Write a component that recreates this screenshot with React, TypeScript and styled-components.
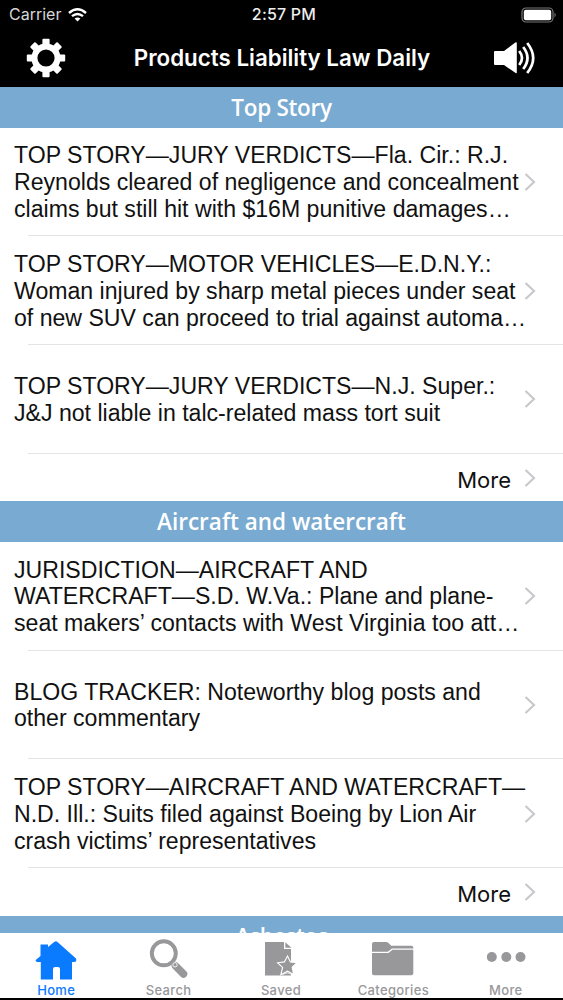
import React from 'react';
import styled, { createGlobalStyle } from 'styled-components';

const GlobalStyle = createGlobalStyle`
  * { box-sizing: border-box; }
  html, body { margin: 0; padding: 0; background: #000; }
`;

const Screen = styled.div`
  width: 563px;
  height: 1000px;
  display: flex;
  flex-direction: column;
  overflow: hidden;
  background: #fff;
  border-bottom: 2px solid #000;
  font-family: 'Liberation Sans', sans-serif;
`;

const StatusBar = styled.div`
  height: 29px;
  flex: none;
  display: grid;
  grid-template-columns: 1fr auto 1fr;
  align-items: center;
  padding: 0 6px 0 9px;
  background: #000;
  color: #fff;
  font: 400 16px/29px Inter, sans-serif;
`;

const Carrier = styled.div`
  display: flex;
  align-items: center;
  gap: 7px;
  color: #d6d6d6;
`;

const Clock = styled.div`
  padding-left: 2px;
  font-weight: 500;
  letter-spacing: 0.2px;
  color: #eee;
`;

const Battery = styled.svg`
  justify-self: end;
`;

const NavBar = styled.header`
  height: 58px;
  flex: none;
  display: flex;
  align-items: center;
  justify-content: space-between;
  padding: 0 27px 0 26px;
  background: #000;
`;

const Title = styled.h1`
  margin: 0 0 0 5px;
  color: #fff;
  font: 600 22.35px/30px Inter, sans-serif;
  white-space: nowrap;
`;

const Feed = styled.main`
  flex: 1;
  min-height: 0;
  overflow: hidden;
`;

const SectionTitle = styled.h2<{ $tracking?: number }>`
  margin: 0;
  height: 40.5px;
  background: #79aad1;
  color: #fff;
  text-align: center;
  font: 600 22.5px/41px 'Open Sans', sans-serif;
  letter-spacing: ${(p) => p.$tracking ?? 0}px;
`;

const Row = styled.article`
  height: 108.75px;
  display: flex;
  align-items: center;
  justify-content: space-between;
  padding: 1px 27px 0 14px;
  background: linear-gradient(#e4e4e6, #e4e4e6) 28px 100% / 100% 1px no-repeat;
`;

const Headline = styled.div`
  color: #111;
  font-size: 23.1px;
  line-height: 26.75px;
`;

const Line = styled.div`
  white-space: nowrap;
`;

const StoryArrow = styled.div`
  display: flex;
  flex: none;
  margin: -1px 0 0 -20px;
`;

const MoreRow = styled.div`
  height: 47.5px;
  display: flex;
  align-items: center;
  justify-content: flex-end;
  gap: 13px;
  padding-right: 27px;
  color: #111;
  font: 400 22px/30px Inter, sans-serif;
`;

const MoreLabel = styled.span`
  padding-top: 5px;
`;

const TabBar = styled.nav`
  height: 65px;
  flex: none;
  display: grid;
  grid-template-columns: repeat(5, 1fr);
  padding-right: 1px;
  background: #fff;
`;

const Tab = styled.div<{ $active?: boolean }>`
  display: flex;
  flex-direction: column;
  align-items: center;
  padding-top: 5px;
  color: ${(p) => (p.$active ? '#0a7aff' : '#98989b')};
  font: 500 13px/16px Inter, sans-serif;
  letter-spacing: 0.35px;

  svg { display: block; }
`;

const Chevron = () => (
  <svg width="12" height="20" viewBox="0 0 12 20" fill="none" stroke="#c9c9cd" strokeWidth="2.2">
    <path d="M1.5 2 L10 10 L1.5 18" />
  </svg>
);

const Wifi = () => (
  <svg width="19" height="14" viewBox="0 0 19 14" fill="none" stroke="#fff" strokeWidth="2.4">
    <path d="M1 5 Q9.5 -2.3 18 5" />
    <path d="M4 8.2 Q9.5 3.6 15 8.2" />
    <path d="M6.6 10.6 Q9.5 8.2 12.4 10.6 L9.5 13.6Z" fill="#fff" stroke="none" />
  </svg>
);

const Gear = () => (
  <svg width="40" height="40" viewBox="-20 -20 40 40">
    <circle r="11.6" fill="none" stroke="#fff" strokeWidth="6" />
    {[0, 45, 90, 135, 180, 225, 270, 315].map((a) => (
      <path key={a} d="M-3.6 -12 V-18.2 Q-3.6 -19.2 -2.6 -19.2 H2.6 Q3.6 -19.2 3.6 -18.2 V-12Z" fill="#fff" transform={`rotate(${a})`} />
    ))}
  </svg>
);

const Speaker = () => (
  <svg width="43" height="34" viewBox="0 0 43 34" fill="none" stroke="#fff" strokeWidth="2.7">
    <path d="M2 10 H11 L22.3 1.5 Q23.8 .6 23.8 2 V31.5 Q23.8 33 22.3 31.8 L11 24 H2 Q1 24 1 23 V11 Q1 10 2 10Z" fill="#fff" stroke="none" />
    <path d="M26.2 10 Q31.8 17 26.2 24" />
    <path d="M30.2 6 Q38.8 17 30.2 28" />
    <path d="M34.2 2 Q46.2 17 34.2 32" />
  </svg>
);

const HomeIcon = () => (
  <svg width="42" height="44" viewBox="0 0 42 44" fill="currentColor">
    <path d="M5.5 18 V6.5 H13 V9 L19.5 3.7 Q21 2.6 22.5 3.9 L41 20.5 Q42 23.8 39.5 24 H37 V41.5 H25 V31 Q25 29 23 29 H20 Q18 29 18 31 V41.5 H5.8 V24 H2 Q-.2 23 1 21.8Z" />
  </svg>
);

const SearchIcon = () => (
  <svg width="42" height="44" viewBox="0 0 42 44" fill="none" stroke="currentColor">
    <circle cx="15.8" cy="15.3" r="12" strokeWidth="3.9" />
    <path d="M27.5 27.8 L35.5 36" strokeWidth="7.6" strokeLinecap="round" />
    <circle cx="27" cy="26.8" r="2.2" stroke="#fff" strokeWidth=".9" />
  </svg>
);

const SavedIcon = () => (
  <svg width="42" height="44" viewBox="0 0 42 44" fill="currentColor">
    <path d="M5 4 H24 V11 H31 V37.5 H5Z" />
    <path d="M25.3 4.2 L31.5 9.8 H25.3Z" />
    <path d="M27.5 18 L30.4 23.9 L37 24.6 L32.2 29.2 L33.6 36.4 L27.5 33.2 L20.8 36.8 L22.6 29.4 L17.6 24.8 L24.4 23.9Z" stroke="#fff" strokeWidth="1.1" />
    <path d="M22.5 36.8 Q27.5 33 32 36.8" fill="none" stroke="#fff" strokeWidth=".8" />
  </svg>
);

const FolderIcon = () => (
  <svg width="42" height="44" viewBox="0 0 42 44" fill="currentColor">
    <path d="M0 13.8 V6 Q0 4 2 4 H14.5 Q16 4 17 5.5 L19.2 7.8 H39.5 Q41.3 7.8 41.3 9.5 V10.5 H20 L15.8 13.8Z" />
    <path d="M0 15 H16.5 L20.5 11.7 H41.3 V35.2 Q41.3 37.3 39.3 37.3 H2 Q0 37.3 0 35.2Z" />
  </svg>
);

const DotsIcon = () => (
  <svg width="42" height="44" viewBox="0 0 42 44" fill="currentColor">
    <circle cx="6.8" cy="19" r="5" />
    <circle cx="21.3" cy="19" r="5" />
    <circle cx="35.5" cy="19" r="5" />
  </svg>
);

const sections: { title: string; tracking: number; stories: string[][] }[] = [
  {
    title: 'Top Story',
    tracking: -0.3,
    stories: [
      [
        'TOP STORY—JURY VERDICTS—Fla. Cir.: R.J.',
        'Reynolds cleared of negligence and concealment',
        'claims but still hit with $16M punitive damages…',
      ],
      [
        'TOP STORY—MOTOR VEHICLES—E.D.N.Y.:',
        'Woman injured by sharp metal pieces under seat',
        'of new SUV can proceed to trial against automa…',
      ],
      [
        'TOP STORY—JURY VERDICTS—N.J. Super.:',
        'J&J not liable in talc-related mass tort suit',
      ],
    ],
  },
  {
    title: 'Aircraft and watercraft',
    tracking: 0,
    stories: [
      [
        'JURISDICTION—AIRCRAFT AND',
        'WATERCRAFT—S.D. W.Va.: Plane and plane-',
        'seat makers’ contacts with West Virginia too att…',
      ],
      [
        'BLOG TRACKER: Noteworthy blog posts and',
        'other commentary',
      ],
      [
        'TOP STORY—AIRCRAFT AND WATERCRAFT—',
        'N.D. Ill.: Suits filed against Boeing by Lion Air',
        'crash victims’ representatives',
      ],
    ],
  },
];

export default function App() {
  return (
    <>
      <GlobalStyle />
      <Screen>
        <StatusBar>
          <Carrier>Carrier <Wifi /></Carrier>
          <Clock>2:57 PM</Clock>
          <Battery width="36" height="16" viewBox="0 0 36 16">
            <rect x="1" y="1" width="31" height="14" rx="4" fill="none" stroke="#77777b" strokeWidth="1.2" />
            <rect x="2.8" y="2.8" width="27.4" height="10.4" rx="2" fill="#fff" />
            <path d="M33.5 5.5 Q36 8 33.5 10.5Z" fill="#77777b" />
          </Battery>
        </StatusBar>
        <NavBar>
          <Gear />
          <Title>Products Liability Law Daily</Title>
          <Speaker />
        </NavBar>
        <Feed>
          {sections.map((section) => (
            <section key={section.title}>
              <SectionTitle $tracking={section.tracking}>{section.title}</SectionTitle>
              {section.stories.map((lines) => (
                <Row key={lines[0]}>
                  <Headline>
                    {lines.map((text) => (
                      <Line key={text}>{text}</Line>
                    ))}
                  </Headline>
                  <StoryArrow><Chevron /></StoryArrow>
                </Row>
              ))}
              <MoreRow><MoreLabel>More</MoreLabel><Chevron /></MoreRow>
            </section>
          ))}
          <SectionTitle $tracking={-0.6}>Asbestos</SectionTitle>
        </Feed>
        <TabBar>
          <Tab $active><HomeIcon />Home</Tab>
          <Tab><SearchIcon />Search</Tab>
          <Tab><SavedIcon />Saved</Tab>
          <Tab><FolderIcon />Categories</Tab>
          <Tab><DotsIcon />More</Tab>
        </TabBar>
      </Screen>
    </>
  );
}
